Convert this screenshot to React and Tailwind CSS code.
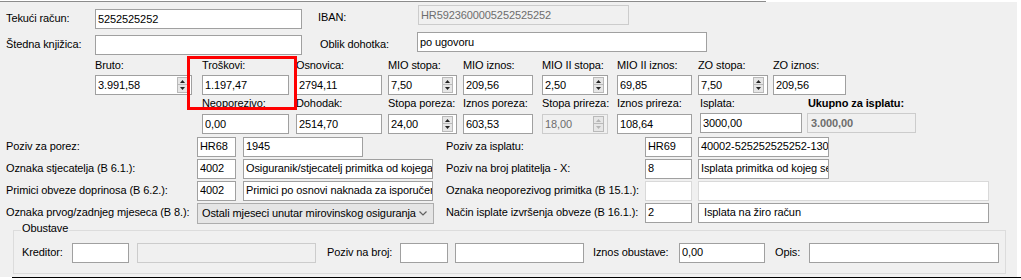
import clsx from "clsx";

const variants = {
  normal: "bg-white border-[#a0a0a0] text-black",
  disabled: "bg-[#f0f0f0] border-[#cccccc] text-[#6d6d6d]",
  light: "bg-white border-[#d9d9d9] text-black",
};

const Field = ({ value = "", variant = "normal", className, children }) => (
  <div
    className={clsx(
      "h-[20px] shrink-0 border pl-[2px] flex items-center whitespace-nowrap overflow-hidden",
      variants[variant],
      className
    )}
  >
    <span className="flex-1 overflow-hidden">{value}</span>
    {children}
  </div>
);

const Arrow = ({ up, disabled }) => (
  <svg width="5" height="3" viewBox="0 0 5 3">
    <path d={up ? "M0 3 L2.5 0 L5 3Z" : "M0 0 L2.5 3 L5 0Z"} fill={disabled ? "#b5b5b5" : "#222"} />
  </svg>
);

const Spin = ({ value, disabled, className }) => (
  <Field value={value} variant={disabled ? "disabled" : "normal"} className={className}>
    <div className="flex flex-col h-[16px] w-[11px] mr-[3px] shrink-0">
      <div className="h-[8px] border border-[#b9b9b9] bg-[#e6e6e6] flex items-center justify-center">
        <Arrow up disabled={disabled} />
      </div>
      <div className="h-[8px] border border-t-0 border-[#b9b9b9] bg-[#e6e6e6] flex items-center justify-center">
        <Arrow disabled={disabled} />
      </div>
    </div>
  </Field>
);

const Col = ({ label, className, children, bold }) => (
  <div className={clsx("flex flex-col shrink-0", className)}>
    <div className={clsx("h-[13px] whitespace-nowrap", bold && "font-bold")}>{label}</div>
    {children}
  </div>
);

const Line = ({ label, a, b, bClass, rLabel, c, d, dClass, light, combo }) => (
  <div className="flex items-center h-[19px]">
    <div className="w-[446px] flex items-center shrink-0">
      <div className="w-[197px] pl-[6px] shrink-0 whitespace-nowrap">{label}</div>
      {combo ? (
        <div className="w-[237px] h-[21px] border border-[#adadad] bg-[#e5e5e5] flex items-center pl-[4px] pr-[6px] mt-[2px]">
          <span className="flex-1 whitespace-nowrap overflow-hidden">{combo}</span>
          <svg width="8" height="5" viewBox="0 0 8 5">
            <path d="M0.5 0.5 L4 4 L7.5 0.5" stroke="#606060" strokeWidth="1.2" fill="none" />
          </svg>
        </div>
      ) : (
        <>
          <Field className="w-[39px] h-[19px]" value={a} />
          <Field className={clsx("ml-[7px] h-[19px]", bClass)} value={b} />
        </>
      )}
    </div>
    <div className="w-[199px] shrink-0 whitespace-nowrap">{rLabel}</div>
    <Field className="w-[47px] h-[19px]" variant={light ? "light" : "normal"} value={c} />
    <Field className={clsx("ml-[6px] h-[19px]", dClass)} variant={light ? "light" : "normal"} value={d} />
  </div>
);

export default function App() {
  return (
    <div className="w-[1021px] h-[280px] bg-white overflow-hidden text-[11px] leading-[13px] tracking-[-0.1px] text-black font-['Liberation_Sans',Arial,sans-serif]">
      <div className="h-[1px]" />
      <div className="flex h-[1px]">
        <div className="w-[766px] bg-[#8c8c8c]" />
      </div>
      <div className="relative w-[1017px] h-[275px] bg-[#f0f0f0]">
        {/* Tekući račun / IBAN */}
        <div className="flex h-[24px] pt-[3px] box-content">
          <div className="w-[95px] pl-[6px] pt-[7px] shrink-0">Tekući račun:</div>
          <Field className="w-[207px] mt-[4px]" value="5252525252" />
          <div className="w-[116px] pl-[16px] pt-[6px] shrink-0">IBAN:</div>
          <Field variant="disabled" className="w-[211px]" value="HR5923600005252525252" />
        </div>

        {/* Štedna knjižica / Oblik dohotka */}
        <div className="flex h-[26px]">
          <div className="w-[95px] pl-[6px] pt-[9px] shrink-0">Štedna knjižica:</div>
          <Field className="w-[207px] mt-[6px]" />
          <div className="w-[115px] pl-[18px] pt-[9px] shrink-0">Oblik dohotka:</div>
          <Field className="w-[290px] mt-[3px]" value="po ugovoru" />
        </div>

        {/* iznosi 1 */}
        <div className="flex h-[40px] pl-[95px] pt-[4px] gap-0">
          <Col label="Bruto:" className="w-[107px] gap-[3px]">
            <Spin className="w-[97px]" value="3.991,58" />
          </Col>
          <Col label="Troškovi:" className="w-[94px] gap-[3px]">
            <Field className="w-[87px]" value="1.197,47" />
          </Col>
          <Col label="Osnovica:" className="w-[92px] gap-[3px]">
            <Field className="w-[86px]" value="2794,11" />
          </Col>
          <Col label="MIO stopa:" className="w-[75px] gap-[3px]">
            <Spin className="w-[69px]" value="7,50" />
          </Col>
          <Col label="MIO iznos:" className="w-[79px] gap-[3px]">
            <Field className="w-[70px]" value="209,56" />
          </Col>
          <Col label="MIO II stopa:" className="w-[75px] gap-[3px]">
            <Spin className="w-[66px]" value="2,50" />
          </Col>
          <Col label="MIO II iznos:" className="w-[81px] gap-[3px]">
            <Field className="w-[75px]" value="69,85" />
          </Col>
          <Col label="ZO stopa:" className="w-[75px] gap-[3px]">
            <Spin className="w-[70px]" value="7,50" />
          </Col>
          <Col label="ZO iznos:" className="w-[73px] gap-[3px]">
            <Field className="w-[73px]" value="209,56" />
          </Col>
        </div>

        {/* iznosi 2 */}
        <div className="flex h-[39px] pl-[202px] pt-[2px]">
          <Col label="Neoporezivo:" className="w-[94px] gap-[4px]">
            <Field className="w-[87px]" value="0,00" />
          </Col>
          <Col label="Dohodak:" className="w-[92px] gap-[4px]">
            <Field className="w-[86px]" value="2514,70" />
          </Col>
          <Col label="Stopa poreza:" className="w-[75px] gap-[4px]">
            <Spin className="w-[69px]" value="24,00" />
          </Col>
          <Col label="Iznos poreza:" className="w-[79px] gap-[4px]">
            <Field className="w-[70px]" value="603,53" />
          </Col>
          <Col label="Stopa prireza:" className="w-[75px] gap-[4px]">
            <Spin disabled className="w-[66px]" value="18,00" />
          </Col>
          <Col label="Iznos prireza:" className="w-[83px] gap-[4px]">
            <Field className="w-[75px]" value="108,64" />
          </Col>
          <Col label="Isplata:" className="w-[107px] gap-[3px]">
            <Field className="w-[102px]" value="3000,00" />
          </Col>
          <Col label="Ukupno za isplatu:" bold className="w-[110px] gap-[3px] pl-[1px]">
            <Field variant="disabled" className="w-[109px] font-bold -ml-[1px] pl-[3px]" value="3.000,00" />
          </Col>
        </div>

        {/* pozivi i oznake */}
        <div className="flex flex-col gap-[3px] mt-[3px]">
          <Line
            label="Poziv za porez:"
            a="HR68"
            b="1945"
            bClass="w-[120px]"
            rLabel="Poziv za isplatu:"
            c="HR69"
            d="40002-525252525252-130"
            dClass="w-[131px]"
          />
          <Line
            label="Oznaka stjecatelja (B 6.1.):"
            a="4002"
            b="Osiguranik/stjecatelj primitka od kojega se"
            bClass="w-[190px]"
            rLabel="Poziv na broj platitelja - X:"
            c="8"
            d="Isplata primitka od kojeg se"
            dClass="w-[131px]"
          />
          <Line
            label="Primici obveze doprinosa (B 6.2.):"
            a="4002"
            b="Primici po osnovi naknada za isporučene"
            bClass="w-[190px]"
            rLabel="Oznaka neoporezivog primitka (B 15.1.):"
            light
            dClass="w-[291px]"
          />
          <Line
            label="Oznaka prvog/zadnjeg mjeseca (B 8.):"
            combo="Ostali mjeseci unutar mirovinskog osiguranja"
            rLabel="Način isplate izvršenja obveze (B 16.1.):"
            c="2"
            d=" Isplata na žiro račun"
            dClass="w-[291px] whitespace-pre"
          />
        </div>

        {/* Obustave */}
        <div className="relative ml-[13px] mt-[8px] w-[993px] h-[44px] border border-[#dcdcdc] pt-[12px]">
          <div className="absolute left-[7px] top-[-9px] px-[1px] bg-[#f0f0f0]">Obustave</div>
          <div className="flex items-center h-[19px]">
            <div className="w-[58px] pl-[8px] shrink-0">Kreditor:</div>
            <Field className="w-[57px] h-[19px]" />
            <Field variant="disabled" className="ml-[8px] w-[179px] h-[19px]" />
            <div className="ml-[11px] w-[73px] shrink-0">Poziv na broj:</div>
            <Field className="w-[48px] h-[19px]" />
            <Field className="ml-[7px] w-[129px] h-[19px]" />
            <div className="ml-[9px] w-[86px] shrink-0">Iznos obustave:</div>
            <Field className="w-[86px] h-[19px]" value="0,00" />
            <div className="ml-[10px] w-[34px] shrink-0">Opis:</div>
            <Field className="w-[190px] h-[19px]" />
          </div>
        </div>

        {/* oznaka */}
        <div className="absolute left-[187px] top-[54px] w-[110px] h-[54px] border-[3px] border-[#ff0000]" />
      </div>
      <div className="flex h-[1px]">
        <div className="w-[12px]" />
        <div className="flex-1 bg-black" />
      </div>
    </div>
  );
}
